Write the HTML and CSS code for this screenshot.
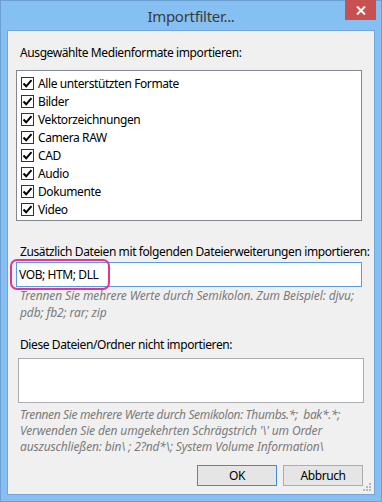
FILE: index.html
```html
<!DOCTYPE html>
<html lang="de">
<head>
<meta charset="utf-8">
<title>Importfilter...</title>
<link rel="stylesheet" href="styles.css">
</head>
<body>
<div class="window">
  <div class="titlebar">
    <span class="title">Importfilter...</span>
    <div class="close"><svg width="10" height="9" viewBox="0 0 10 9"><path d="M1 0.5 L9 8.5 M9 0.5 L1 8.5" stroke="#fff" stroke-width="2"/></svg></div>
  </div>
  <div class="client">
    <div class="label first">Ausgewählte Medienformate importieren:</div>
    <div class="listbox">
      <div class="row"><span class="cb"><svg width="11" height="11" viewBox="0 0 11 11"><path d="M1.5 5.5 L4.2 8.3 L9.5 2.2" fill="none" stroke="#000" stroke-width="2"/></svg></span><span>Alle unterstützten Formate</span></div>
      <div class="row"><span class="cb"><svg width="11" height="11" viewBox="0 0 11 11"><path d="M1.5 5.5 L4.2 8.3 L9.5 2.2" fill="none" stroke="#000" stroke-width="2"/></svg></span><span>Bilder</span></div>
      <div class="row"><span class="cb"><svg width="11" height="11" viewBox="0 0 11 11"><path d="M1.5 5.5 L4.2 8.3 L9.5 2.2" fill="none" stroke="#000" stroke-width="2"/></svg></span><span>Vektorzeichnungen</span></div>
      <div class="row"><span class="cb"><svg width="11" height="11" viewBox="0 0 11 11"><path d="M1.5 5.5 L4.2 8.3 L9.5 2.2" fill="none" stroke="#000" stroke-width="2"/></svg></span><span>Camera RAW</span></div>
      <div class="row"><span class="cb"><svg width="11" height="11" viewBox="0 0 11 11"><path d="M1.5 5.5 L4.2 8.3 L9.5 2.2" fill="none" stroke="#000" stroke-width="2"/></svg></span><span>CAD</span></div>
      <div class="row"><span class="cb"><svg width="11" height="11" viewBox="0 0 11 11"><path d="M1.5 5.5 L4.2 8.3 L9.5 2.2" fill="none" stroke="#000" stroke-width="2"/></svg></span><span>Audio</span></div>
      <div class="row"><span class="cb"><svg width="11" height="11" viewBox="0 0 11 11"><path d="M1.5 5.5 L4.2 8.3 L9.5 2.2" fill="none" stroke="#000" stroke-width="2"/></svg></span><span>Dokumente</span></div>
      <div class="row"><span class="cb"><svg width="11" height="11" viewBox="0 0 11 11"><path d="M1.5 5.5 L4.2 8.3 L9.5 2.2" fill="none" stroke="#000" stroke-width="2"/></svg></span><span>Video</span></div>
    </div>
    <div class="label second">Zusätzlich Dateien mit folgenden Dateierweiterungen importieren:</div>
    <div class="inputwrap">
      <div class="input">VOB; HTM; DLL</div>
      <div class="highlight"></div>
    </div>
    <div class="hint">Trennen Sie mehrere Werte durch Semikolon. Zum Beispiel: djvu;<br>pdb; fb2; rar; zip</div>
    <div class="label third">Diese Dateien/Ordner nicht importieren:</div>
    <div class="textarea"></div>
    <div class="hint hint2"><span class="tight">Trennen Sie mehrere Werte durch Semikolon: Thumbs.*;&nbsp; bak*.*;</span><br>Verwenden Sie den umgekehrten Schrägstrich '\' um Order<br>auszuschließen: bin\ ; 2?nd*\; System Volume Information\</div>
    <div class="buttons">
      <div class="btn default">OK</div>
      <div class="btn">Abbruch</div>
    </div>
    <svg class="grip" width="9" height="9" viewBox="0 0 9 9"><g fill="#b9b9b9"><rect x="6" y="0" width="2" height="2"/><rect x="3" y="3" width="2" height="2"/><rect x="6" y="3" width="2" height="2"/><rect x="0" y="6" width="2" height="2"/><rect x="3" y="6" width="2" height="2"/><rect x="6" y="6" width="2" height="2"/></g></svg>
  </div>
</div>
</body>
</html>
```
FILE: styles.css
```css
html, body {
  margin: 0;
  padding: 0;
}
body {
  width: 382px;
  height: 502px;
  overflow: hidden;
  font-family: "Noto Sans", "DejaVu Sans", sans-serif;
  font-size: 12px;
  color: #000;
}
.window {
  box-sizing: border-box;
  width: 382px;
  height: 502px;
  background: #86bff1;
  border: 1px solid #6d9fd2;
  display: flex;
  flex-direction: column;
  position: relative;
}
.titlebar {
  height: 29px;
  flex: none;
  display: flex;
  align-items: center;
  justify-content: center;
  position: relative;
}
.title {
  font-size: 15px;
  letter-spacing: -0.3px;
  color: #3b3b3b;
  margin-top: 1px;
}
.close {
  position: absolute;
  top: -1px;
  right: 5px;
  width: 31px;
  height: 20px;
  background: #c75050;
  display: flex;
  align-items: center;
  justify-content: center;
}
.client {
  flex: 1;
  margin: 0 6px 6px 6px;
  border: 1px solid #73a5d8;
  background: #f0f0f0;
  padding: 0 12px 0 8px;
  position: relative;
  display: flex;
  flex-direction: column;
  letter-spacing: -0.4px;
}
.label {
  padding-left: 4px;
  line-height: 16px;
  white-space: nowrap;
}
.label.first { margin-top: 14px; }
.label.second { margin-top: 23px; }
.label.third { margin-top: 16px; }
.listbox {
  margin-top: 9px;
  height: 151px;
  box-sizing: border-box;
  border: 1px solid #828790;
  background: #fff;
  padding: 3px 4px;
}
.row {
  height: 18px;
  display: flex;
  align-items: center;
  gap: 4px;
}
.cb {
  box-sizing: border-box;
  width: 13px;
  height: 13px;
  border: 1px solid #333;
  background: #fff;
  display: flex;
  align-items: center;
  justify-content: center;
  flex: none;
}
.cb svg { display: block; }
.inputwrap {
  margin-top: 2px;
  position: relative;
}
.input {
  box-sizing: border-box;
  height: 25px;
  border: 1px solid #569de5;
  background: #fff;
  padding-left: 2px;
  line-height: 23px;
}
.highlight {
  position: absolute;
  left: -6px;
  top: -3px;
  width: 100px;
  height: 31px;
  box-sizing: border-box;
  border: 2px solid #e3358b;
  border-radius: 7px;
}
.hint {
  font-style: italic;
  color: #7b7b7b;
  line-height: 17px;
  padding-left: 4px;
  white-space: nowrap;
  letter-spacing: -0.1px;
}
.textarea {
  margin: 5px -2px 0 2px;
  height: 45px;
  box-sizing: border-box;
  border: 1px solid #abadb3;
  background: #fff;
}
.hint2 {
  margin-top: 4px;
  line-height: 16px;
  letter-spacing: -0.15px;
}
.hint2 .tight {
  letter-spacing: -0.35px;
}
.buttons {
  margin-top: 10px;
  display: flex;
  justify-content: flex-end;
  gap: 6px;
  margin-right: -1px;
}
.btn {
  box-sizing: border-box;
  width: 80px;
  height: 21px;
  border: 1px solid #acacac;
  background: #e5e5e5;
  text-align: center;
  line-height: 19px;
}
.btn.default {
  border-color: #3c8be0;
}
.grip {
  position: absolute;
  right: 2px;
  bottom: 2px;
}
```
